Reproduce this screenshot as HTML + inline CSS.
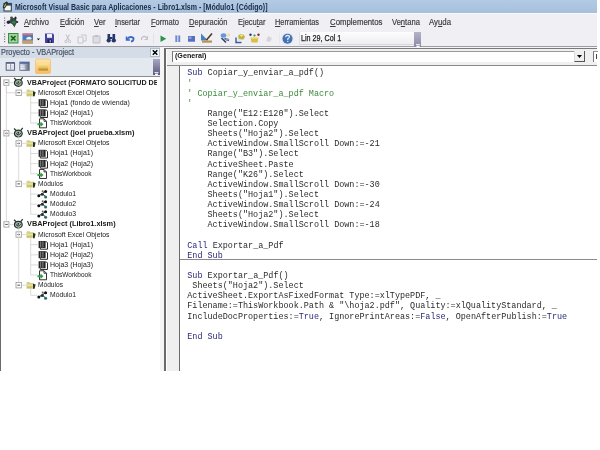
<!DOCTYPE html><html><head><meta charset="utf-8"><style>
*{margin:0;padding:0;box-sizing:border-box}
html,body{width:600px;height:450px;overflow:hidden;background:#fff}
.a{position:absolute}
.t{position:absolute;white-space:pre;line-height:1;transform-origin:0 0}
.code{position:absolute;left:187.3px;top:0;font-family:"Liberation Mono",monospace;font-size:8.45px;white-space:pre;color:#2b2b2b}
.code div{position:absolute;left:0;height:10px;line-height:10px}
u{text-decoration-thickness:0.8px;text-underline-offset:0.8px}
.k{color:#2a2a78}.c{color:#3c8a3c}
</style></head><body><div class="a" style="left:0;top:0;width:600px;height:450px;filter:blur(0.45px)">

<div class="a" style="left:0;top:12px;width:597px;height:35px;background:#efeff4"></div>
<div class="a" style="left:0;top:0;width:597px;height:12.7px;background:linear-gradient(#b3cae4,#a6c0dc)"></div>
<div class="a" style="left:0;top:12.7px;width:597px;height:1.3px;background:#f8f9fc"></div>
<div class="a" style="left:0;top:46px;width:597px;height:1px;background:#9c9ca4"></div>
<div class="a" style="left:0;top:47px;width:597px;height:324px;background:#f5f5f5"></div>
<div class="a" style="left:0;top:47px;width:160px;height:11px;background:#d4dce7"></div>
<div class="a" style="left:0;top:57.5px;width:160px;height:18.5px;background:#e4e9f0"></div>
<div class="a" style="left:150px;top:48px;width:10px;height:8.5px;background:#f4f6f9;border:1px solid #b0bccc"></div>
<svg class="a" style="left:150px;top:48px" width="10" height="9"><path d="M2.8 2.3L7.3 6.8M7.3 2.3L2.8 6.8" stroke="#000" stroke-width="1.5"/></svg>
<div class="a" style="left:153.2px;top:58.5px;width:6.8px;height:16.5px;background:linear-gradient(#a8a8c0,#7a7898 60%,#5e5c7e)"></div>
<svg class="a" style="left:153px;top:59.5px" width="7" height="16"><path d="M1.5 12.5H5.5M2 14H5L3.5 15.5Z" stroke="#fff" stroke-width="0.8" fill="#fff"/></svg>
<div class="a" style="left:0;top:75.8px;width:160px;height:295.2px;background:#fff;border-left:1.3px solid #6a6a6a;border-top:1px solid #8c8c8c"></div>
<div class="a" style="left:298.5px;top:31.8px;width:115px;height:13.2px;background:linear-gradient(#fdfdfe,#eeeef2);border-left:1px solid #e0e0e6;border-bottom:1px solid #d8d8de"></div>
<div class="a" style="left:413.5px;top:31.5px;width:7.5px;height:15.5px;background:linear-gradient(#b4b4c8,#9896b0 70%,#8a88a4)"></div>
<svg class="a" style="left:413.5px;top:31.5px" width="8" height="16"><path d="M2 12.5H6M2.5 14H5.5L4 15.5Z" stroke="#fff" stroke-width="0.8" fill="#fff"/></svg>
<div class="a" style="left:164.3px;top:47.5px;width:432.7px;height:323.5px;background:#fff;border-left:2.2px solid #6a6a6a;border-top:1px solid #7a7a7a"></div>
<div class="a" style="left:166.5px;top:48.5px;width:430.5px;height:16px;background:#f0f0f0"></div>
<div class="a" style="left:166.5px;top:64.5px;width:430.5px;height:1px;background:#8a8a8a"></div>
<div class="a" style="left:172px;top:50.5px;width:413px;height:11.5px;background:#fff;border-left:1.5px solid #777;border-top:1px solid #999"></div>
<div class="a" style="left:574px;top:50.5px;width:11px;height:11.5px;background:#f0f0f0;border-right:1px solid #555;border-bottom:1px solid #555;border-left:1px solid #ddd"></div>
<svg class="a" style="left:574px;top:50px" width="11" height="12"><path d="M3 5H8L5.5 8Z" fill="#000"/></svg>
<div class="a" style="left:592.5px;top:50.5px;width:5px;height:11.5px;background:#fff;border-left:1.5px solid #777;border-top:1px solid #999"></div>
<div class="a" style="left:595.5px;top:53.5px;width:1.5px;height:5px;background:#444"></div>
<div class="a" style="left:166.5px;top:65.5px;width:13px;height:305.5px;background:#efefef;border-right:1.2px solid #6a6a6a"></div>
<div class="a" style="left:180px;top:259.2px;width:417px;height:1px;background:#8a8a8a"></div>
<svg class="a" style="left:0;top:0" width="600" height="450"><g><rect x="4" y="3.4" width="7.3" height="7.6" fill="#f6f8f0" stroke="#2a3444" stroke-width="1"/><rect x="7" y="3.2" width="4.6" height="2.4" fill="#2a4868"/><ellipse cx="5.3" cy="5" rx="1.6" ry="3.8" transform="rotate(30 5.3 5)" fill="#1e2418"/><ellipse cx="5.1" cy="5.4" rx="0.7" ry="2.4" transform="rotate(30 5.1 5.4)" fill="#a8b468"/></g><rect x="4" y="17.5" width="1.2" height="1.2" fill="#7a7a8a"/><rect x="4" y="20" width="1.2" height="1.2" fill="#7a7a8a"/><rect x="4" y="22.5" width="1.2" height="1.2" fill="#7a7a8a"/><rect x="4" y="25" width="1.2" height="1.2" fill="#7a7a8a"/><g><path d="M11.5 17.5L15.4 18.5L17.2 22L14.4 26.8L12 24L8.3 22.2Z" fill="#2c5038"/><ellipse cx="13.8" cy="22.3" rx="1.8" ry="1.4" fill="#3e7a54"/><circle cx="11.5" cy="17.8" r="1.4" fill="#4a5040"/><ellipse cx="15.5" cy="18.1" rx="1.1" ry="1.5" fill="#2a1a40"/><circle cx="8.4" cy="22.2" r="1.7" fill="#2a1e48"/><circle cx="17.2" cy="22" r="1.1" fill="#2a2a40"/><path d="M13 24.5L14.5 27.5L15.6 24.5Z" fill="#404850"/></g><rect x="4" y="33.5" width="1.2" height="1.2" fill="#7a7a8a"/><rect x="4" y="36" width="1.2" height="1.2" fill="#7a7a8a"/><rect x="4" y="38.5" width="1.2" height="1.2" fill="#7a7a8a"/><rect x="4" y="41" width="1.2" height="1.2" fill="#7a7a8a"/><rect x="8.5" y="33.5" width="9.5" height="9.5" fill="#9ed49a" stroke="#3e8a44" stroke-width="1"/><path d="M11 36L15.5 40.5M15.5 36L11 40.5" stroke="#12601a" stroke-width="1.6"/><g><rect x="22.5" y="33.5" width="10.5" height="10" fill="#4a7cc4"/><rect x="22.5" y="33.5" width="10.5" height="1.7" fill="#d8707a"/><path d="M27 37.5Q29 36 31 37.5Q32.5 38.5 31 39.5H26.5Q25.5 38.5 27 37.5Z" fill="#f0f0f6"/><rect x="22.5" y="40.3" width="10.5" height="3.2" fill="#c8a060"/></g><path d="M36.8 38.5H40L38.4 40.3Z" fill="#111"/><g><path d="M45 33.5H53L54 34.5V43H45Z" fill="#4545a0"/><rect x="47" y="34" width="5" height="3.8" fill="#f0f0f8"/><rect x="47.5" y="39.5" width="4.5" height="3.5" fill="#1e1e50"/><rect x="49.5" y="40" width="1.5" height="2.5" fill="#8a8ac8"/></g><rect x="58" y="33" width="1" height="11" fill="#e6e6ec"/><path d="M66 34.5L69 40M69.5 34.5L66.5 40" stroke="#bdbdc4" stroke-width="1"/><circle cx="66" cy="41.5" r="1.2" fill="none" stroke="#bdbdc4" stroke-width="0.9"/><circle cx="69.5" cy="41.5" r="1.2" fill="none" stroke="#bdbdc4" stroke-width="0.9"/><path d="M78 37H83V43H78ZM81 35H86V41H83" fill="none" stroke="#c4c4ca" stroke-width="1"/><path d="M93 36H100V43H93Z" fill="#dcdce2" stroke="#c0c0c8" stroke-width="1"/><rect x="95" y="35" width="3" height="2" fill="#c0c0c8"/><g fill="#26386a"><rect x="107.5" y="34" width="2.6" height="5"/><rect x="112.5" y="34" width="2.6" height="5"/><ellipse cx="108.7" cy="40.5" rx="2.2" ry="2"/><ellipse cx="113.8" cy="40.5" rx="2.2" ry="2"/><rect x="110" y="37" width="2.5" height="2"/></g><path d="M126.5 36.5L126.5 40L130 40" fill="none" stroke="#3a6ac8" stroke-width="1.5"/><path d="M127 39.5Q129.5 35.5 133.5 38Q134 41 131 41.5" fill="none" stroke="#3a6ac8" stroke-width="1.8"/><path d="M141.5 40Q141.5 36 145 36.5L147.5 38.5" fill="none" stroke="#c0c0c8" stroke-width="1.3"/><path d="M147.5 36V39.5H144.5" fill="none" stroke="#c0c0c8" stroke-width="1"/><rect x="153" y="33" width="1" height="11" fill="#e2e2e8"/><path d="M160.5 35.5L166.3 38.8L160.5 42Z" fill="#2a944a"/><rect x="175.3" y="35.5" width="2" height="6.5" fill="#6a86c8"/><rect x="178.2" y="35.5" width="2" height="6.5" fill="#6a86c8"/><rect x="175.3" y="35.5" width="0.8" height="6.5" fill="#9ab0e0"/><rect x="178.2" y="35.5" width="0.8" height="6.5" fill="#9ab0e0"/><rect x="188" y="36" width="7" height="5.7" fill="#5470c0"/><rect x="188.5" y="36.5" width="3" height="2.5" fill="#8aa0dc"/><path d="M201 33.5L208 40.5H201Z" fill="#4a80c0"/><path d="M212 33.5L206.5 40" stroke="#4a3a20" stroke-width="1.5"/><rect x="202" y="40.5" width="10" height="2.2" fill="#b89450"/><g><ellipse cx="223.5" cy="35.5" rx="2.8" ry="2.2" fill="#6a96d8"/><path d="M221.5 38L226 42.5M224.5 38.5L229 40.5" stroke="#34426e" stroke-width="1.6"/><ellipse cx="227" cy="39.5" rx="1.8" ry="1.3" fill="#8a9ac0"/><rect x="227" y="33.5" width="3" height="3" fill="#eee0b0"/></g><g><path d="M238 36.5Q238.5 34 241.5 34Q244.5 34.3 245 37L243.5 39.5H239Z" fill="#c0b448"/><ellipse cx="241.5" cy="35.5" rx="1.5" ry="1" fill="#f0e890"/><path d="M236 37.5V42.5H241.5" fill="none" stroke="#3a5a96" stroke-width="1.4"/><rect x="237.5" y="39" width="3" height="2.5" fill="#dfe6f2"/></g><g><circle cx="250.5" cy="34.8" r="1.2" fill="#2a3a6a"/><circle cx="254.5" cy="35.5" r="1.1" fill="#3a8a5a"/><circle cx="258.5" cy="34.8" r="1.2" fill="#8a2a3a"/><path d="M250.5 37.5H258.5L257.5 42.5H251.5Z" fill="#d8c040"/><path d="M251 38H258" stroke="#f0e8a0" stroke-width="1"/></g><path d="M266 41L268 36L272 38L270 42Z" fill="#d4d4da"/><rect x="279" y="33" width="1" height="11" fill="#e6e6ec"/><circle cx="287.5" cy="38.8" r="5.8" fill="#d8e4f4"/><circle cx="287.5" cy="38.8" r="5" fill="#4472b4"/><path d="M285.6 37.2Q285.8 35.3 287.6 35.3Q289.5 35.4 289.4 37Q289.2 38.2 287.8 38.8V40" fill="none" stroke="#f0f4fa" stroke-width="1.2"/><rect x="287.2" y="40.8" width="1.2" height="1.2" fill="#f0f4fa"/><g><rect x="6.2" y="62.8" width="8.3" height="7.4" fill="#f2f4f9" stroke="#5c6684" stroke-width="1.1"/><rect x="6.2" y="62.3" width="8.3" height="1.3" fill="#4c5878"/><path d="M10.6 63.5V69.5" stroke="#8a92ac" stroke-width="0.9"/><path d="M7.5 66H9.5M11.5 66H13.5M7.5 68H9.5M11.5 68H13.5" stroke="#b8bed0" stroke-width="0.7"/></g><defs><linearGradient id="vo" x1="0" y1="0" x2="1" y2="0"><stop offset="0" stop-color="#dfe4ee"/><stop offset="0.45" stop-color="#b4bccc"/><stop offset="1" stop-color="#5a6478"/></linearGradient></defs><g><rect x="19.8" y="62" width="9.4" height="8.4" fill="url(#vo)" stroke="#6a7290" stroke-width="0.8"/><rect x="19.8" y="62" width="9.4" height="1.8" fill="#5868a0"/><path d="M21 66.2H24.5M21 68.3H25" stroke="#f4f6fa" stroke-width="0.9"/></g><defs><linearGradient id="og" x1="0" y1="0" x2="0" y2="1"><stop offset="0" stop-color="#fde6b0"/><stop offset="1" stop-color="#f7bc58"/></linearGradient><linearGradient id="fg" x1="0" y1="0" x2="0" y2="1"><stop offset="0" stop-color="#fbe898"/><stop offset="0.55" stop-color="#e8c060"/><stop offset="1" stop-color="#a87a28"/></linearGradient></defs><rect x="35.5" y="59" width="15" height="14.5" rx="1.5" fill="url(#og)" stroke="#f2c070" stroke-width="0.8"/><rect x="38.3" y="63.8" width="9.8" height="6.8" rx="0.8" fill="url(#fg)"/><rect x="3.9" y="79.90" width="5" height="5.4" fill="#fff" stroke="#a0a0a0" stroke-width="0.9"/><path d="M5.2 82.60H7.8" stroke="#404040" stroke-width="0.9"/><path d="M9 82.60H13" stroke="#d0d0d0" stroke-width="0.8"/><g transform="translate(13.3,77.30)"><path d="M0.8 0.6L4 4M9.4 0L6.6 3.6" stroke="#2a3a30" stroke-width="1.3"/><ellipse cx="5" cy="5.6" rx="3.9" ry="3.4" fill="#a8b8ac" stroke="#24342a" stroke-width="1.2"/><path d="M2.5 5.2Q5 8.5 7.5 5.2" fill="none" stroke="#24342a" stroke-width="1"/><circle cx="5" cy="4.8" r="0.9" fill="#24342a"/></g><rect x="16" y="90.03" width="5.4" height="5.4" fill="#fff" stroke="#a0a0a0" stroke-width="0.9"/><path d="M17.4 92.73H20" stroke="#404040" stroke-width="0.9"/><path d="M21.5 92.73H26" stroke="#d0d0d0" stroke-width="0.8"/><g transform="translate(26,88.73)"><path d="M0.5 1.8Q0.5 0.8 1.5 0.8H3.5L4.5 1.8H8V7.5H0.5Z" fill="#d4d088"/><path d="M0.5 3.2H7.5V7.6H0.5Z" fill="#e4e2a0"/><path d="M1 5H6.5V7H1Z" fill="#c8c470"/><path d="M7 2.5L9.6 3.2L8.6 7.6H7Z" fill="#283020"/></g><path d="M30.7 102.86H38" stroke="#d0d0d0" stroke-width="0.8"/><g transform="translate(38.3,98.66)"><rect x="0.3" y="0.5" width="7" height="7" fill="#262626"/><path d="M2.4 1V7M4.6 1V7" stroke="#b8b8b8" stroke-width="0.7"/><path d="M7.3 1.2H8.2L9.2 2.4V8.7H2V7.5" fill="none" stroke="#262626" stroke-width="1"/></g><path d="M30.7 112.99H38" stroke="#d0d0d0" stroke-width="0.8"/><g transform="translate(38.3,108.79)"><rect x="0.3" y="0.5" width="7" height="7" fill="#262626"/><path d="M2.4 1V7M4.6 1V7" stroke="#b8b8b8" stroke-width="0.7"/><path d="M7.3 1.2H8.2L9.2 2.4V8.7H2V7.5" fill="none" stroke="#262626" stroke-width="1"/></g><path d="M30.7 123.12H38" stroke="#d0d0d0" stroke-width="0.8"/><g transform="translate(37.5,118.32)"><path d="M2 0.5H6.5L9 3V9.5H2Z" fill="#fff" stroke="#1e1e1e" stroke-width="0.9"/><path d="M6.5 0.5V3H9" fill="none" stroke="#1e1e1e" stroke-width="0.8"/><path d="M0 5H3V3.2L6 6L3 8.8V7H0Z" fill="#3a9a4a"/></g><rect x="3.9" y="130.55" width="5" height="5.4" fill="#fff" stroke="#a0a0a0" stroke-width="0.9"/><path d="M5.2 133.25H7.8" stroke="#404040" stroke-width="0.9"/><path d="M9 133.25H13" stroke="#d0d0d0" stroke-width="0.8"/><g transform="translate(13.3,127.95)"><path d="M0.8 0.6L4 4M9.4 0L6.6 3.6" stroke="#2a3a30" stroke-width="1.3"/><ellipse cx="5" cy="5.6" rx="3.9" ry="3.4" fill="#a8b8ac" stroke="#24342a" stroke-width="1.2"/><path d="M2.5 5.2Q5 8.5 7.5 5.2" fill="none" stroke="#24342a" stroke-width="1"/><circle cx="5" cy="4.8" r="0.9" fill="#24342a"/></g><rect x="16" y="140.68" width="5.4" height="5.4" fill="#fff" stroke="#a0a0a0" stroke-width="0.9"/><path d="M17.4 143.38H20" stroke="#404040" stroke-width="0.9"/><path d="M21.5 143.38H26" stroke="#d0d0d0" stroke-width="0.8"/><g transform="translate(26,139.38)"><path d="M0.5 1.8Q0.5 0.8 1.5 0.8H3.5L4.5 1.8H8V7.5H0.5Z" fill="#d4d088"/><path d="M0.5 3.2H7.5V7.6H0.5Z" fill="#e4e2a0"/><path d="M1 5H6.5V7H1Z" fill="#c8c470"/><path d="M7 2.5L9.6 3.2L8.6 7.6H7Z" fill="#283020"/></g><path d="M30.7 153.51H38" stroke="#d0d0d0" stroke-width="0.8"/><g transform="translate(38.3,149.31)"><rect x="0.3" y="0.5" width="7" height="7" fill="#262626"/><path d="M2.4 1V7M4.6 1V7" stroke="#b8b8b8" stroke-width="0.7"/><path d="M7.3 1.2H8.2L9.2 2.4V8.7H2V7.5" fill="none" stroke="#262626" stroke-width="1"/></g><path d="M30.7 163.64H38" stroke="#d0d0d0" stroke-width="0.8"/><g transform="translate(38.3,159.44)"><rect x="0.3" y="0.5" width="7" height="7" fill="#262626"/><path d="M2.4 1V7M4.6 1V7" stroke="#b8b8b8" stroke-width="0.7"/><path d="M7.3 1.2H8.2L9.2 2.4V8.7H2V7.5" fill="none" stroke="#262626" stroke-width="1"/></g><path d="M30.7 173.77H38" stroke="#d0d0d0" stroke-width="0.8"/><g transform="translate(37.5,168.97)"><path d="M2 0.5H6.5L9 3V9.5H2Z" fill="#fff" stroke="#1e1e1e" stroke-width="0.9"/><path d="M6.5 0.5V3H9" fill="none" stroke="#1e1e1e" stroke-width="0.8"/><path d="M0 5H3V3.2L6 6L3 8.8V7H0Z" fill="#3a9a4a"/></g><rect x="16" y="181.20" width="5.4" height="5.4" fill="#fff" stroke="#a0a0a0" stroke-width="0.9"/><path d="M17.4 183.90H20" stroke="#404040" stroke-width="0.9"/><path d="M21.5 183.90H26" stroke="#d0d0d0" stroke-width="0.8"/><g transform="translate(26,179.90)"><path d="M0.5 1.8Q0.5 0.8 1.5 0.8H3.5L4.5 1.8H8V7.5H0.5Z" fill="#d4d088"/><path d="M0.5 3.2H7.5V7.6H0.5Z" fill="#e4e2a0"/><path d="M1 5H6.5V7H1Z" fill="#c8c470"/><path d="M7 2.5L9.6 3.2L8.6 7.6H7Z" fill="#283020"/></g><path d="M30.7 194.03H37" stroke="#d0d0d0" stroke-width="0.8"/><g transform="translate(37.2,189.73)"><path d="M1.5 6L5 4L8.5 1.5M5 4L8.5 7" stroke="#303030" stroke-width="1"/><circle cx="1.6" cy="6" r="1.5" fill="#111"/><circle cx="5" cy="4.5" r="1.5" fill="#1a3a3a"/><circle cx="8.4" cy="1.8" r="1.5" fill="#111"/><circle cx="8.4" cy="7.2" r="1.5" fill="#2a6a6a"/><circle cx="5.5" cy="1.5" r="1" fill="#6a6a40"/></g><path d="M30.7 204.16H37" stroke="#d0d0d0" stroke-width="0.8"/><g transform="translate(37.2,199.86)"><path d="M1.5 6L5 4L8.5 1.5M5 4L8.5 7" stroke="#303030" stroke-width="1"/><circle cx="1.6" cy="6" r="1.5" fill="#111"/><circle cx="5" cy="4.5" r="1.5" fill="#1a3a3a"/><circle cx="8.4" cy="1.8" r="1.5" fill="#111"/><circle cx="8.4" cy="7.2" r="1.5" fill="#2a6a6a"/><circle cx="5.5" cy="1.5" r="1" fill="#6a6a40"/></g><path d="M30.7 214.29H37" stroke="#d0d0d0" stroke-width="0.8"/><g transform="translate(37.2,209.99)"><path d="M1.5 6L5 4L8.5 1.5M5 4L8.5 7" stroke="#303030" stroke-width="1"/><circle cx="1.6" cy="6" r="1.5" fill="#111"/><circle cx="5" cy="4.5" r="1.5" fill="#1a3a3a"/><circle cx="8.4" cy="1.8" r="1.5" fill="#111"/><circle cx="8.4" cy="7.2" r="1.5" fill="#2a6a6a"/><circle cx="5.5" cy="1.5" r="1" fill="#6a6a40"/></g><rect x="3.9" y="221.72" width="5" height="5.4" fill="#fff" stroke="#a0a0a0" stroke-width="0.9"/><path d="M5.2 224.42H7.8" stroke="#404040" stroke-width="0.9"/><path d="M9 224.42H13" stroke="#d0d0d0" stroke-width="0.8"/><g transform="translate(13.3,219.12)"><path d="M0.8 0.6L4 4M9.4 0L6.6 3.6" stroke="#2a3a30" stroke-width="1.3"/><ellipse cx="5" cy="5.6" rx="3.9" ry="3.4" fill="#a8b8ac" stroke="#24342a" stroke-width="1.2"/><path d="M2.5 5.2Q5 8.5 7.5 5.2" fill="none" stroke="#24342a" stroke-width="1"/><circle cx="5" cy="4.8" r="0.9" fill="#24342a"/></g><rect x="16" y="231.85" width="5.4" height="5.4" fill="#fff" stroke="#a0a0a0" stroke-width="0.9"/><path d="M17.4 234.55H20" stroke="#404040" stroke-width="0.9"/><path d="M21.5 234.55H26" stroke="#d0d0d0" stroke-width="0.8"/><g transform="translate(26,230.55)"><path d="M0.5 1.8Q0.5 0.8 1.5 0.8H3.5L4.5 1.8H8V7.5H0.5Z" fill="#d4d088"/><path d="M0.5 3.2H7.5V7.6H0.5Z" fill="#e4e2a0"/><path d="M1 5H6.5V7H1Z" fill="#c8c470"/><path d="M7 2.5L9.6 3.2L8.6 7.6H7Z" fill="#283020"/></g><path d="M30.7 244.68H38" stroke="#d0d0d0" stroke-width="0.8"/><g transform="translate(38.3,240.48)"><rect x="0.3" y="0.5" width="7" height="7" fill="#262626"/><path d="M2.4 1V7M4.6 1V7" stroke="#b8b8b8" stroke-width="0.7"/><path d="M7.3 1.2H8.2L9.2 2.4V8.7H2V7.5" fill="none" stroke="#262626" stroke-width="1"/></g><path d="M30.7 254.81H38" stroke="#d0d0d0" stroke-width="0.8"/><g transform="translate(38.3,250.61)"><rect x="0.3" y="0.5" width="7" height="7" fill="#262626"/><path d="M2.4 1V7M4.6 1V7" stroke="#b8b8b8" stroke-width="0.7"/><path d="M7.3 1.2H8.2L9.2 2.4V8.7H2V7.5" fill="none" stroke="#262626" stroke-width="1"/></g><path d="M30.7 264.94H38" stroke="#d0d0d0" stroke-width="0.8"/><g transform="translate(38.3,260.74)"><rect x="0.3" y="0.5" width="7" height="7" fill="#262626"/><path d="M2.4 1V7M4.6 1V7" stroke="#b8b8b8" stroke-width="0.7"/><path d="M7.3 1.2H8.2L9.2 2.4V8.7H2V7.5" fill="none" stroke="#262626" stroke-width="1"/></g><path d="M30.7 275.07H38" stroke="#d0d0d0" stroke-width="0.8"/><g transform="translate(37.5,270.27)"><path d="M2 0.5H6.5L9 3V9.5H2Z" fill="#fff" stroke="#1e1e1e" stroke-width="0.9"/><path d="M6.5 0.5V3H9" fill="none" stroke="#1e1e1e" stroke-width="0.8"/><path d="M0 5H3V3.2L6 6L3 8.8V7H0Z" fill="#3a9a4a"/></g><rect x="16" y="282.50" width="5.4" height="5.4" fill="#fff" stroke="#a0a0a0" stroke-width="0.9"/><path d="M17.4 285.20H20" stroke="#404040" stroke-width="0.9"/><path d="M21.5 285.20H26" stroke="#d0d0d0" stroke-width="0.8"/><g transform="translate(26,281.20)"><path d="M0.5 1.8Q0.5 0.8 1.5 0.8H3.5L4.5 1.8H8V7.5H0.5Z" fill="#d4d088"/><path d="M0.5 3.2H7.5V7.6H0.5Z" fill="#e4e2a0"/><path d="M1 5H6.5V7H1Z" fill="#c8c470"/><path d="M7 2.5L9.6 3.2L8.6 7.6H7Z" fill="#283020"/></g><path d="M30.7 295.33H37" stroke="#d0d0d0" stroke-width="0.8"/><g transform="translate(37.2,291.03)"><path d="M1.5 6L5 4L8.5 1.5M5 4L8.5 7" stroke="#303030" stroke-width="1"/><circle cx="1.6" cy="6" r="1.5" fill="#111"/><circle cx="5" cy="4.5" r="1.5" fill="#1a3a3a"/><circle cx="8.4" cy="1.8" r="1.5" fill="#111"/><circle cx="8.4" cy="7.2" r="1.5" fill="#2a6a6a"/><circle cx="5.5" cy="1.5" r="1" fill="#6a6a40"/></g><path d="M6.4 85.40V221.62" stroke="#d0d0d0" stroke-width="0.8"/><path d="M18.7 136.05V181.10" stroke="#d0d0d0" stroke-width="0.8"/><path d="M18.7 227.22V282.40" stroke="#d0d0d0" stroke-width="0.8"/><path d="M6.4 85.40V92.73H16" stroke="#d0d0d0" stroke-width="0.8" fill="none"/><path d="M30.7 95.73V123.12" stroke="#d0d0d0" stroke-width="0.8"/><path d="M30.7 146.38V173.77" stroke="#d0d0d0" stroke-width="0.8"/><path d="M30.7 186.90V214.29" stroke="#d0d0d0" stroke-width="0.8"/><path d="M30.7 237.55V275.07" stroke="#d0d0d0" stroke-width="0.8"/><path d="M30.7 288.20V295.33" stroke="#d0d0d0" stroke-width="0.8"/></svg>
<div class="t" id="tx0" style="left:14.5px;top:2.58px;font-family:'Liberation Sans', sans-serif;font-size:9px;font-weight:bold;color:#1b2a45;transform:scaleX(0.7792);">Microsoft Visual Basic para Aplicaciones - Libro1.xlsm - [Módulo1 (Código)]</div>
<div class="t" id="tx1" style="left:23.5px;top:18.09px;font-family:'Liberation Sans', sans-serif;font-size:8.4px;font-weight:normal;color:#3c3c3c;transform:scaleX(0.8949);-webkit-text-stroke:0.18px #3c3c3c;"><u>A</u>rchivo</div>
<div class="t" id="tx2" style="left:59.7px;top:18.09px;font-family:'Liberation Sans', sans-serif;font-size:8.4px;font-weight:normal;color:#3c3c3c;transform:scaleX(0.8841);-webkit-text-stroke:0.18px #3c3c3c;"><u>E</u>dición</div>
<div class="t" id="tx3" style="left:94px;top:18.09px;font-family:'Liberation Sans', sans-serif;font-size:8.4px;font-weight:normal;color:#3c3c3c;transform:scaleX(0.9143);-webkit-text-stroke:0.18px #3c3c3c;"><u>V</u>er</div>
<div class="t" id="tx4" style="left:115px;top:18.09px;font-family:'Liberation Sans', sans-serif;font-size:8.4px;font-weight:normal;color:#3c3c3c;transform:scaleX(0.8801);-webkit-text-stroke:0.18px #3c3c3c;"><u>I</u>nsertar</div>
<div class="t" id="tx5" style="left:151px;top:18.09px;font-family:'Liberation Sans', sans-serif;font-size:8.4px;font-weight:normal;color:#3c3c3c;transform:scaleX(0.8973);-webkit-text-stroke:0.18px #3c3c3c;"><u>F</u>ormato</div>
<div class="t" id="tx6" style="left:189px;top:18.09px;font-family:'Liberation Sans', sans-serif;font-size:8.4px;font-weight:normal;color:#3c3c3c;transform:scaleX(0.8983);-webkit-text-stroke:0.18px #3c3c3c;"><u>D</u>epuración</div>
<div class="t" id="tx7" style="left:237.5px;top:18.09px;font-family:'Liberation Sans', sans-serif;font-size:8.4px;font-weight:normal;color:#3c3c3c;transform:scaleX(0.8948);-webkit-text-stroke:0.18px #3c3c3c;">Ejecu<u>t</u>ar</div>
<div class="t" id="tx8" style="left:275px;top:18.09px;font-family:'Liberation Sans', sans-serif;font-size:8.4px;font-weight:normal;color:#3c3c3c;transform:scaleX(0.8751);-webkit-text-stroke:0.18px #3c3c3c;"><u>H</u>erramientas</div>
<div class="t" id="tx9" style="left:329.5px;top:18.09px;font-family:'Liberation Sans', sans-serif;font-size:8.4px;font-weight:normal;color:#3c3c3c;transform:scaleX(0.9318);-webkit-text-stroke:0.18px #3c3c3c;"><u>C</u>omplementos</div>
<div class="t" id="tx10" style="left:391.7px;top:18.09px;font-family:'Liberation Sans', sans-serif;font-size:8.4px;font-weight:normal;color:#3c3c3c;transform:scaleX(0.9069);-webkit-text-stroke:0.18px #3c3c3c;">Ve<u>n</u>tana</div>
<div class="t" id="tx11" style="left:429px;top:18.09px;font-family:'Liberation Sans', sans-serif;font-size:8.4px;font-weight:normal;color:#3c3c3c;transform:scaleX(0.9312);-webkit-text-stroke:0.18px #3c3c3c;">Ay<u>u</u>da</div>
<div class="t" id="tx12" style="left:301.3px;top:34.42px;font-family:'Liberation Sans', sans-serif;font-size:8.6px;font-weight:normal;color:#1e1e1e;transform:scaleX(0.8329);-webkit-text-stroke:0.25px #1e1e1e;">Lin 29, Col 1</div>
<div class="t" id="tx13" style="left:1px;top:47.52px;font-family:'Liberation Sans', sans-serif;font-size:8.6px;font-weight:normal;color:#465264;transform:scaleX(0.8538);-webkit-text-stroke:0.2px #465264;">Proyecto - VBAProject</div>
<div class="t" id="tx14" style="left:26.6px;top:78.57px;font-family:'Liberation Sans', sans-serif;font-size:7.6px;font-weight:bold;color:#1a1a1a;transform:scaleX(0.9407);">VBAProject (FORMATO SOLICITUD DE</div>
<div class="t" id="tx15" style="left:37.8px;top:88.70px;font-family:'Liberation Sans', sans-serif;font-size:7.6px;font-weight:normal;color:#1a1a1a;transform:scaleX(0.8964);">Microsoft Excel Objetos</div>
<div class="t" id="tx16" style="left:50.1px;top:98.83px;font-family:'Liberation Sans', sans-serif;font-size:7.6px;font-weight:normal;color:#1a1a1a;transform:scaleX(0.9220);">Hoja1 (fondo de vivienda)</div>
<div class="t" id="tx17" style="left:50.1px;top:108.96px;font-family:'Liberation Sans', sans-serif;font-size:7.6px;font-weight:normal;color:#1a1a1a;transform:scaleX(0.9176);">Hoja2 (Hoja1)</div>
<div class="t" id="tx18" style="left:50.1px;top:119.09px;font-family:'Liberation Sans', sans-serif;font-size:7.6px;font-weight:normal;color:#1a1a1a;transform:scaleX(0.8553);">ThisWorkbook</div>
<div class="t" id="tx19" style="left:26.6px;top:129.22px;font-family:'Liberation Sans', sans-serif;font-size:7.6px;font-weight:bold;color:#1a1a1a;transform:scaleX(0.9865);">VBAProject (joel prueba.xlsm)</div>
<div class="t" id="tx20" style="left:37.8px;top:139.35px;font-family:'Liberation Sans', sans-serif;font-size:7.6px;font-weight:normal;color:#1a1a1a;transform:scaleX(0.8964);">Microsoft Excel Objetos</div>
<div class="t" id="tx21" style="left:50.1px;top:149.48px;font-family:'Liberation Sans', sans-serif;font-size:7.6px;font-weight:normal;color:#1a1a1a;transform:scaleX(0.9176);">Hoja1 (Hoja1)</div>
<div class="t" id="tx22" style="left:50.1px;top:159.61px;font-family:'Liberation Sans', sans-serif;font-size:7.6px;font-weight:normal;color:#1a1a1a;transform:scaleX(0.9176);">Hoja2 (Hoja2)</div>
<div class="t" id="tx23" style="left:50.1px;top:169.74px;font-family:'Liberation Sans', sans-serif;font-size:7.6px;font-weight:normal;color:#1a1a1a;transform:scaleX(0.8553);">ThisWorkbook</div>
<div class="t" id="tx24" style="left:37.8px;top:179.87px;font-family:'Liberation Sans', sans-serif;font-size:7.6px;font-weight:normal;color:#1a1a1a;transform:scaleX(0.8710);">Módulos</div>
<div class="t" id="tx25" style="left:50.1px;top:190.00px;font-family:'Liberation Sans', sans-serif;font-size:7.6px;font-weight:normal;color:#1a1a1a;transform:scaleX(0.8922);">Módulo1</div>
<div class="t" id="tx26" style="left:50.1px;top:200.13px;font-family:'Liberation Sans', sans-serif;font-size:7.6px;font-weight:normal;color:#1a1a1a;transform:scaleX(0.8922);">Módulo2</div>
<div class="t" id="tx27" style="left:50.1px;top:210.26px;font-family:'Liberation Sans', sans-serif;font-size:7.6px;font-weight:normal;color:#1a1a1a;transform:scaleX(0.8922);">Módulo3</div>
<div class="t" id="tx28" style="left:26.6px;top:220.39px;font-family:'Liberation Sans', sans-serif;font-size:7.6px;font-weight:bold;color:#1a1a1a;transform:scaleX(0.9675);">VBAProject (Libro1.xlsm)</div>
<div class="t" id="tx29" style="left:37.8px;top:230.52px;font-family:'Liberation Sans', sans-serif;font-size:7.6px;font-weight:normal;color:#1a1a1a;transform:scaleX(0.8964);">Microsoft Excel Objetos</div>
<div class="t" id="tx30" style="left:50.1px;top:240.65px;font-family:'Liberation Sans', sans-serif;font-size:7.6px;font-weight:normal;color:#1a1a1a;transform:scaleX(0.9176);">Hoja1 (Hoja1)</div>
<div class="t" id="tx31" style="left:50.1px;top:250.78px;font-family:'Liberation Sans', sans-serif;font-size:7.6px;font-weight:normal;color:#1a1a1a;transform:scaleX(0.9176);">Hoja2 (Hoja2)</div>
<div class="t" id="tx32" style="left:50.1px;top:260.91px;font-family:'Liberation Sans', sans-serif;font-size:7.6px;font-weight:normal;color:#1a1a1a;transform:scaleX(0.9176);">Hoja3 (Hoja3)</div>
<div class="t" id="tx33" style="left:50.1px;top:271.04px;font-family:'Liberation Sans', sans-serif;font-size:7.6px;font-weight:normal;color:#1a1a1a;transform:scaleX(0.8553);">ThisWorkbook</div>
<div class="t" id="tx34" style="left:37.8px;top:281.17px;font-family:'Liberation Sans', sans-serif;font-size:7.6px;font-weight:normal;color:#1a1a1a;transform:scaleX(0.8710);">Módulos</div>
<div class="t" id="tx35" style="left:50.1px;top:291.30px;font-family:'Liberation Sans', sans-serif;font-size:7.6px;font-weight:normal;color:#1a1a1a;transform:scaleX(0.8922);">Módulo1</div>
<div class="t" id="tx36" style="left:175px;top:52.37px;font-family:'Liberation Sans', sans-serif;font-size:7.6px;font-weight:bold;color:#111;transform:scaleX(0.9387);">(General)</div>
<div class="a" style="left:157.4px;top:77px;width:2.6px;height:11px;background:#fff"></div>
<div class="code">
<div style="top:68.40px"><span class="k">Sub</span> Copiar_y_enviar_a_pdf()</div>
<div style="top:78.53px"><span class="c">&#x27;</span></div>
<div style="top:88.66px"><span class="c">&#x27; Copiar_y_enviar_a_pdf Macro</span></div>
<div style="top:98.79px"><span class="c">&#x27;</span></div>
<div style="top:108.92px">    Range(&quot;E12:E120&quot;).Select</div>
<div style="top:119.05px">    Selection.Copy</div>
<div style="top:129.18px">    Sheets(&quot;Hoja2&quot;).Select</div>
<div style="top:139.31px">    ActiveWindow.SmallScroll Down:=-21</div>
<div style="top:149.44px">    Range(&quot;B3&quot;).Select</div>
<div style="top:159.57px">    ActiveSheet.Paste</div>
<div style="top:169.70px">    Range(&quot;K26&quot;).Select</div>
<div style="top:179.83px">    ActiveWindow.SmallScroll Down:=-30</div>
<div style="top:189.96px">    Sheets(&quot;Hoja1&quot;).Select</div>
<div style="top:200.09px">    ActiveWindow.SmallScroll Down:=-24</div>
<div style="top:210.22px">    Sheets(&quot;Hoja2&quot;).Select</div>
<div style="top:220.35px">    ActiveWindow.SmallScroll Down:=-18</div>
<div style="top:230.48px"></div>
<div style="top:240.61px"><span class="k">Call</span> Exportar_a_Pdf</div>
<div style="top:250.74px"><span class="k">End Sub</span></div>
<div style="top:260.87px"></div>
<div style="top:271.00px"><span class="k">Sub</span> Exportar_a_Pdf()</div>
<div style="top:281.13px"> Sheets(&quot;Hoja2&quot;).Select</div>
<div style="top:291.26px">ActiveSheet.ExportAsFixedFormat Type:=xlTypePDF, _</div>
<div style="top:301.39px">Filename:=ThisWorkbook.Path &amp; &quot;\hoja2.pdf&quot;, Quality:=xlQualityStandard, _</div>
<div style="top:311.52px">IncludeDocProperties:=<span class="k">True</span>, IgnorePrintAreas:=<span class="k">False</span>, OpenAfterPublish:=<span class="k">True</span></div>
<div style="top:321.65px"></div>
<div style="top:331.78px"><span class="k">End Sub</span></div>
</div>
</div></body></html>
